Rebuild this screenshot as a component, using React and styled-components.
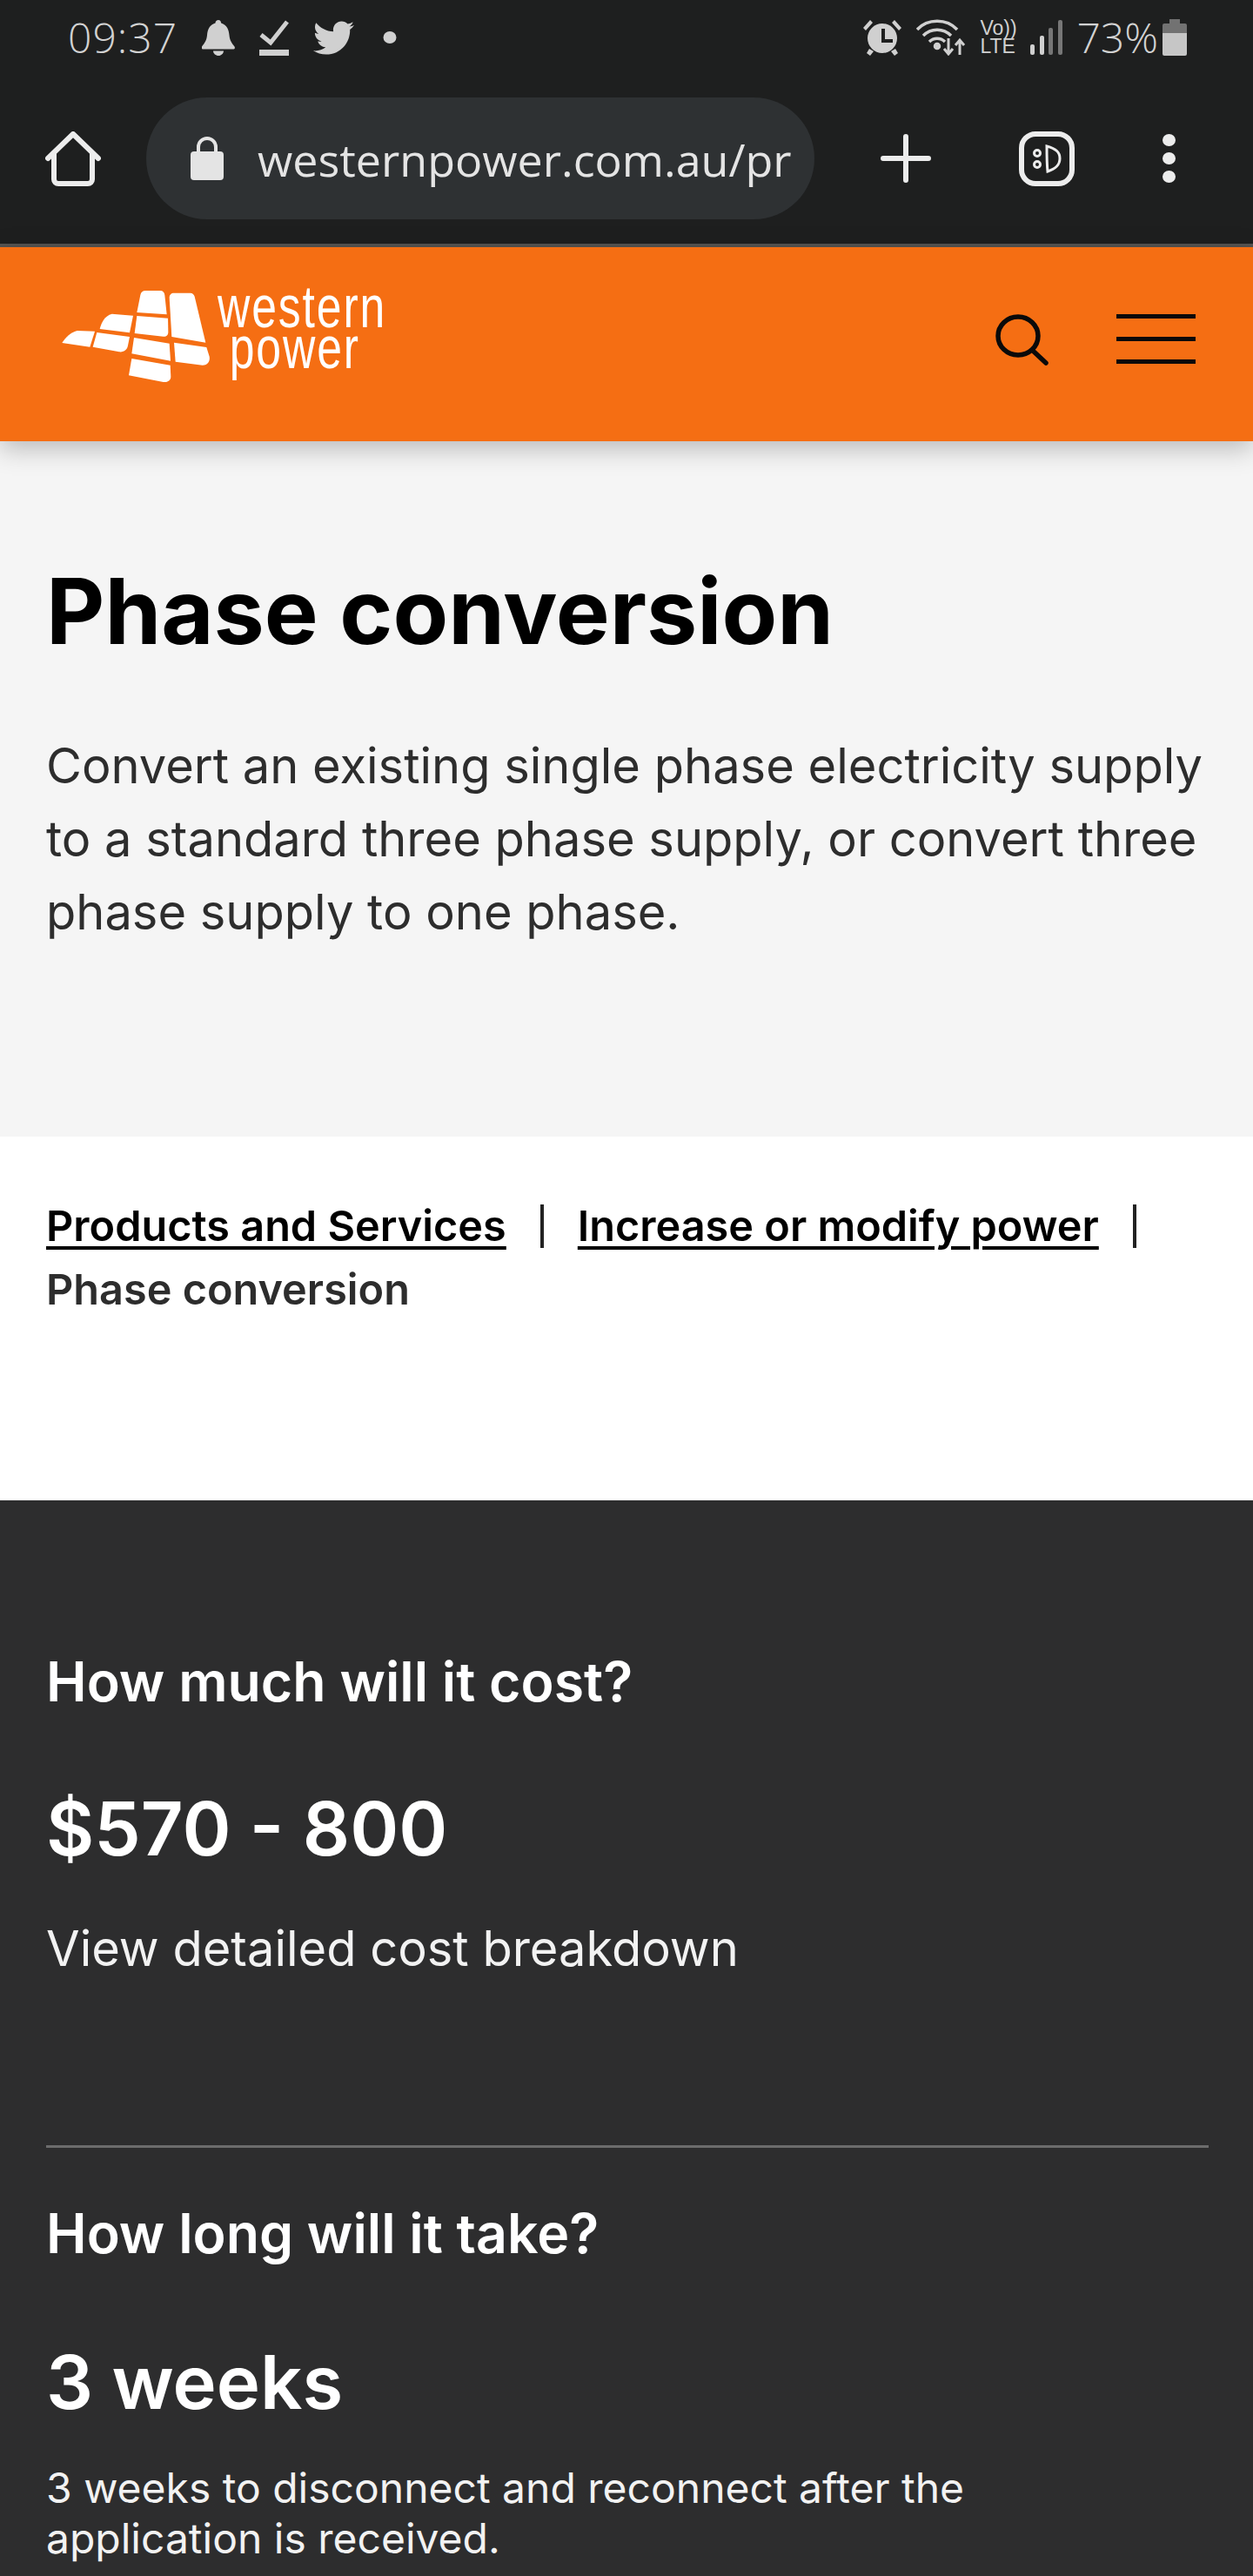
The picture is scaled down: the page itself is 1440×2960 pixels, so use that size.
import React from "react";
import styled, { createGlobalStyle } from "styled-components";
import { FaTwitter } from "react-icons/fa";

const Global = createGlobalStyle`
  html, body { margin: 0; padding: 0; background: #2d2d2e; }
  * { box-sizing: border-box; }
  #root { width: 1440px; height: 2960px; overflow: hidden; }
`;

const Page = styled.div`
  width: 1440px;
  height: 2960px;
  font-family: "Inter", "Liberation Sans", sans-serif;
  background: #2d2d2e;
  overflow: hidden;
`;

const Chrome = styled.div`
  height: 284px;
  background: #1e1f1f;
  border-bottom: 4px solid #565452;
  color: #d6d6d6;
`;

const StatusBar = styled.div`
  height: 112px;
  padding: 21px 76px 0 78px;
  display: flex;
  justify-content: space-between;
  align-items: flex-start;
`;

const StatusGroup = styled.div`
  display: flex;
  align-items: center;
  height: 44px;
  gap: ${(p) => p.$gap}px;
`;

const StatusText = styled.span`
  font-family: "Open Sans", sans-serif;
  font-weight: 300;
  font-size: 48px;
  line-height: 44px;
  letter-spacing: ${(p) => p.$ls || 0}px;
  margin-right: ${(p) => p.$mr || 0}px;
  color: #d2d2d2;
  white-space: nowrap;
`;

const DotSlot = styled.span`
  display: flex;
  margin-left: 5px;
`;

const VolteBox = styled.div`
  width: 42px;
`;

const Volte = styled.span`
  font-family: "Liberation Sans", sans-serif;
  font-size: 23px;
  line-height: 21px;
  color: #d0d0d0;
  display: block;
  white-space: pre;
`;

const Toolbar = styled.div`
  height: 140px;
  display: flex;
  align-items: center;
  padding-left: 52px;
`;

const UrlPill = styled.div`
  width: 768px;
  height: 140px;
  margin-left: 52px;
  padding-left: 51px;
  border-radius: 70px;
  background: #2e3133;
  display: flex;
  align-items: center;
  gap: 39px;
  flex: none;
`;

const UrlText = styled.span`
  font-family: "Open Sans", sans-serif;
  font-weight: 400;
  font-size: 52px;
  color: #e4e4e4;
  white-space: nowrap;
`;

const ToolIcons = styled.div`
  display: flex;
  align-items: center;
  margin-left: 76px;
  gap: 101px;
`;

const SiteHeader = styled.header`
  height: 223px;
  background: #f56e13;
  box-shadow: 0 8px 28px rgba(0, 0, 0, 0.25);
  position: relative;
  z-index: 2;
  display: flex;
  align-items: flex-start;
  padding: 49px 66px 0 70px;
`;

const Wordmark = styled.div`
  margin-left: 8px;
  margin-top: -4px;
  width: 190px;
  color: #fff;
  font-family: "Liberation Sans", sans-serif;
  font-size: 68px;
  line-height: 47px;
  letter-spacing: 2.5px;
  transform: scaleX(0.76);
  transform-origin: left top;
`;

const WordLine = styled.div`
  padding-left: ${(p) => p.$indent || 0}px;
  white-space: nowrap;
`;

const HeaderActions = styled.div`
  margin-left: auto;
  padding-top: 28px;
  display: flex;
  align-items: flex-start;
  gap: 78px;
`;

const Hamburger = styled.div`
  width: 91px;
  height: 57px;
  display: flex;
  flex-direction: column;
  justify-content: space-between;
`;

const BurgerLine = styled.span`
  height: 5px;
  background: #0a0a0a;
`;

const Hero = styled.section`
  height: 799px;
  background: #f5f5f5;
  padding: 135px 53px 0;
`;

const Title = styled.h1`
  margin: 0 0 76px;
  font-family: "Inter", sans-serif;
  font-weight: 700;
  font-size: 104px;
  line-height: 120px;
  color: #000;
  white-space: nowrap;
`;

const Lead = styled.p`
  margin: 0;
  font-family: "Inter", sans-serif;
  font-weight: 400;
  font-size: 56px;
  line-height: 84px;
  color: #2d2d2d;
  max-width: 1340px;
`;

const Crumbs = styled.nav`
  height: 418px;
  background: #fff;
  padding: 66px 53px 0;
  font-family: "Inter", sans-serif;
  font-weight: 600;
  font-size: 48.600px;
  line-height: 73px;
  color: #2d2d2d;
`;

const CrumbLink = styled.a`
  color: #000;
  text-decoration: underline;
  text-decoration-thickness: 4px;
  text-underline-offset: 6px;
`;

const Pipe = styled.span`
  display: inline-block;
  width: 4px;
  height: 50px;
  background: #222;
  margin: 0 39px;
  vertical-align: -8px;
`;

const Dark = styled.section`
  height: 1236px;
  background: #2d2d2e;
  padding: 0 51px 0 53px;
  color: #fff;
`;

const InfoBlock = styled.div`
  height: ${(p) => p.$h}px;
  padding-top: ${(p) => p.$pt}px;
  border-bottom: ${(p) => (p.$rule ? "3px solid #6c6c6c" : "none")};
`;

const InfoHeading = styled.h2`
  margin: 0;
  font-family: "Inter", sans-serif;
  font-weight: 600;
  font-size: 62.600px;
  line-height: 72px;
`;

const InfoValue = styled.div`
  margin-top: ${(p) => p.$mt}px;
  font-family: "Inter", sans-serif;
  font-weight: 600;
  font-size: 85px;
  line-height: 100px;
`;

const InfoNote = styled.p`
  margin: ${(p) => p.$mt}px 0 0;
  font-family: "Inter", sans-serif;
  font-weight: 400;
  font-size: ${(p) => p.$size}px;
  line-height: ${(p) => p.$lh}px;
  color: #f2f2f2;
  max-width: 1120px;
`;

const Bell = () => (
  <svg width="38" height="41" viewBox="0 0 38 41" fill="#d0d0d0">
    <path d="M19 0c2 0 3 1.500 3 3.500 7 2 9 8 9.500 14 .5 6 3 9 6 13 1 2 0 3-2 3H2c-2 0-3-1-2-3 3-4 5.500-7 6-13 .5-6 2.500-12 9.500-14C15.500 1.500 17 0 19 0z" />
    <path d="M13 35.500h12c0 3-3 5.500-6 5.500s-6-2.500-6-5.500z" />
  </svg>
);

const Check = () => (
  <svg width="34" height="41" viewBox="0 0 34 41" fill="none" stroke="#d0d0d0">
    <path d="M2 17l11 9L32 2" strokeWidth="5" />
    <rect x="0" y="34" width="34" height="7" fill="#d0d0d0" stroke="none" />
  </svg>
);

const Dot = () => (
  <svg width="16" height="14" viewBox="0 0 16 14" fill="#d0d0d0">
    <ellipse cx="8" cy="7" rx="7.500" ry="7" />
  </svg>
);

const Alarm = () => (
  <svg width="46" height="42" viewBox="0 0 46 42" fill="#d0d0d0">
    <circle cx="23" cy="22" r="17" />
    <path d="M1 10L9 1l3 3-8 9zM45 10L37 1l-3 3 8 9zM8 34l5 3-4 5-4-3zM38 34l-5 3 4 5 4-3z" />
    <path d="M22 11h4v12h9v4H22z" fill="#1e1f1f" />
  </svg>
);

const Wifi = () => (
  <svg width="57" height="42" viewBox="0 0 57 42" fill="none" stroke="#d0d0d0" strokeWidth="3.500">
    <path d="M1 12C13-1 35-1 47 12M8 19c9-9 23-9 32 0M15 26c5-5 13-5 18 0" />
    <circle cx="24" cy="31" r="2.500" fill="#d0d0d0" />
    <path d="M37 22v17M32 34l5 6 5-6M50 41V24M45 30l5-6 5 6" strokeWidth="3" />
  </svg>
);

const Signal = () => (
  <svg width="37" height="40" viewBox="0 0 37 40" fill="#d0d0d0">
    <rect x="0" y="28" width="5" height="12" rx="2" />
    <rect x="11" y="18" width="5" height="22" rx="2" />
    <rect x="21" y="9" width="5" height="31" rx="2" fill="#777" />
    <rect x="32" y="0" width="5" height="40" rx="2" fill="#777" />
  </svg>
);

const Battery = () => (
  <svg width="28" height="42" viewBox="0 0 28 42">
    <path d="M8 0h12v5h6a2 2 0 012 2v9H0V7a2 2 0 012-2h6z" fill="#727272" />
    <path d="M0 16h28v24a2 2 0 01-2 2H2a2 2 0 01-2-2z" fill="#c6c6c6" />
  </svg>
);

const Home = () => (
  <svg width="64" height="63" viewBox="0 0 64 63" fill="none" stroke="#ececec" strokeWidth="6" strokeLinejoin="round" strokeLinecap="round">
    <path d="M3 31L32 3l29 28" />
    <path d="M10 26v29a5 5 0 005 5h34a5 5 0 005-5V26" />
  </svg>
);

const Lock = () => (
  <svg width="38" height="50" viewBox="0 0 38 50">
    <path d="M9 20v-8a10 10 0 0120 0v8" fill="none" stroke="#e4e4e4" strokeWidth="4" />
    <rect x="0" y="17" width="38" height="33" rx="4" fill="#e4e4e4" />
  </svg>
);

const Plus = () => (
  <svg width="58" height="56" viewBox="0 0 58 56" stroke="#ececec" strokeWidth="6" strokeLinecap="round">
    <path d="M29 3v50M3 28h52" />
  </svg>
);

const TabCount = () => (
  <svg width="64" height="63" viewBox="0 0 64 63" fill="none" stroke="#ececec">
    <rect x="3" y="3" width="58" height="57" rx="16" strokeWidth="6" />
    <circle cx="21" cy="25" r="3.500" strokeWidth="3" />
    <circle cx="21" cy="38" r="3.500" strokeWidth="3" />
    <path d="M32 17c11 3 15 7 15 14 0 8-5 12-14 15-1-9-1-20-1-29z" strokeWidth="3" />
  </svg>
);

const Kebab = () => (
  <svg width="15" height="56" viewBox="0 0 15 56" fill="#ececec">
    <ellipse cx="7.500" cy="7" rx="7.500" ry="7" />
    <ellipse cx="7.500" cy="28" rx="7.500" ry="7" />
    <ellipse cx="7.500" cy="49" rx="7.500" ry="7" />
  </svg>
);

const LogoMark = () => (
  <svg width="172" height="112" viewBox="88 100 516 336" fill="#fff">
    <path d="M92 283c12-18 28-36 52-42l61 2-17 54z" />
    <path d="M222 235c6-22 16-45 42-52l73 6-12 59z" />
    <path d="M198 297l14-50 113 15-6 30c-2 14-14 24-30 22z" />
    <path d="M350 178l12-60c2-10 8-15 18-15h50c10 0 15 6 16 16l7 66z" />
    <path d="M342 250l8-60 107 8 1 48c0 10-7 16-17 15z" />
    <path d="M332 320l8-55 122 20 4 60z" />
    <path d="M322 395l10-58 133 23 2 40c0 12-12 20-26 18z" />
    <path d="M470 262l-8-135c0-10 6-16 16-16l56 0c8 0 13 5 15 12l38 159z" />
    <path d="M478 282l112 16 10 32c3 16-6 30-24 30l-93-12z" />
  </svg>
);

const SearchIcon = () => (
  <svg width="61" height="59" viewBox="0 0 61 59" fill="none" stroke="#0a0a0a" strokeWidth="5.500" strokeLinecap="round">
    <ellipse cx="26" cy="25" rx="23" ry="22" />
    <path d="M43 42l15 14" />
  </svg>
);

export default function App() {
  return (
    <Page>
      <Global />
      <Chrome>
        <StatusBar>
          <StatusGroup $gap={28}>
            <StatusText $ls={1}>09:37</StatusText>
            <Bell />
            <Check />
            <FaTwitter size={47} color="#d0d0d0" />
            <DotSlot>
              <Dot />
            </DotSlot>
          </StatusGroup>
          <StatusGroup $gap={16}>
            <Alarm />
            <Wifi />
            <VolteBox>
              <Volte>{"Vo))"}</Volte>
              <Volte>LTE</Volte>
            </VolteBox>
            <Signal />
            <StatusText $mr={-11}>73%</StatusText>
            <Battery />
          </StatusGroup>
        </StatusBar>
        <Toolbar>
          <Home />
          <UrlPill>
            <Lock />
            <UrlText>westernpower.com.au/pr</UrlText>
          </UrlPill>
          <ToolIcons>
            <Plus />
            <TabCount />
            <Kebab />
          </ToolIcons>
        </Toolbar>
      </Chrome>
      <SiteHeader>
        <LogoMark />
        <Wordmark>
          <WordLine>western</WordLine>
          <WordLine $indent={18}>power</WordLine>
        </Wordmark>
        <HeaderActions>
          <SearchIcon />
          <Hamburger>
            <BurgerLine />
            <BurgerLine />
            <BurgerLine />
          </Hamburger>
        </HeaderActions>
      </SiteHeader>
      <Hero>
        <Title>Phase conversion</Title>
        <Lead>
          Convert an existing single phase electricity supply to a standard three phase supply, or convert three phase supply to one phase.
        </Lead>
      </Hero>
      <Crumbs>
        <CrumbLink>Products and Services</CrumbLink>
        <Pipe />
        <CrumbLink>Increase or modify power</CrumbLink>
        <Pipe />
        <br />
        Phase conversion
      </Crumbs>
      <Dark>
        <InfoBlock $h={744} $pt={172} $rule>
          <InfoHeading>How much will it cost?</InfoHeading>
          <InfoValue $mt={84}>$570 - 800</InfoValue>
          <InfoNote $mt={45} $size={56} $lh={84}>View detailed cost breakdown</InfoNote>
        </InfoBlock>
        <InfoBlock $h={486} $pt={62}>
          <InfoHeading>How long will it take?</InfoHeading>
          <InfoValue $mt={86}>3 weeks</InfoValue>
          <InfoNote $mt={42} $size={48} $lh={58}>3 weeks to disconnect and reconnect after the application is received.</InfoNote>
        </InfoBlock>
      </Dark>
    </Page>
  );
}
